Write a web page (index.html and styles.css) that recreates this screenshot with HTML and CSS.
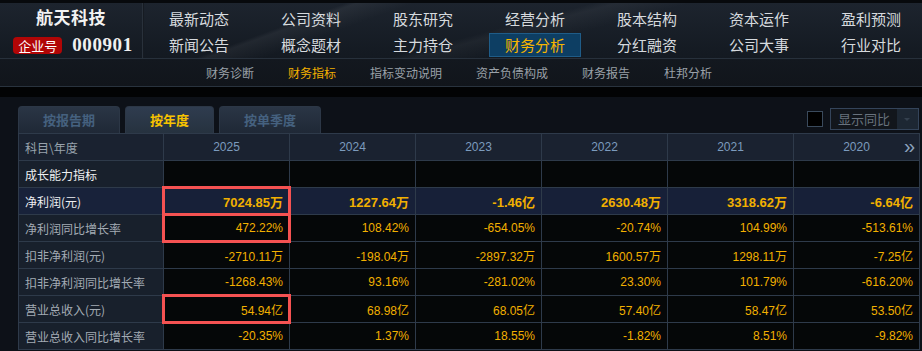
FILE: index.html
```html
<!DOCTYPE html>
<html lang="zh-CN">
<head>
<meta charset="utf-8">
<title>航天科技 - 财务指标</title>
<link rel="stylesheet" href="styles.css">
</head>
<body>
<header class="top">
  <div class="brand-row">
    <div class="brand">
      <div class="brand-name">航天科技</div>
      <div class="brand-code"><span class="badge">企业号</span><span class="code-num">000901</span></div>
    </div>
    <nav class="main-nav">
      <a>最新动态</a><a>公司资料</a><a>股东研究</a><a>经营分析</a><a>股本结构</a><a>资本运作</a><a>盈利预测</a>
      <a>新闻公告</a><a>概念题材</a><a>主力持仓</a><a class="on">财务分析</a><a>分红融资</a><a>公司大事</a><a>行业对比</a>
    </nav>
  </div>
  <nav class="sub-nav">
    <a>财务诊断</a><a class="on">财务指标</a><a>指标变动说明</a><a>资产负债构成</a><a>财务报告</a><a>杜邦分析</a>
  </nav>
</header>
<div class="strip"></div>
<main class="panel">
  <div class="toolbar">
    <div class="tabs">
      <span class="tab w1">按报告期</span>
      <span class="tab w2 on">按年度</span>
      <span class="tab w1">按单季度</span>
    </div>
    <div class="tools">
      <span class="check"></span>
      <span class="select"><span class="select-text">显示同比</span><span class="select-btn"></span></span>
    </div>
  </div>
  <table class="grid">
    <colgroup><col class="c-label"><col><col><col><col><col><col></colgroup>
    <thead>
      <tr><th class="label">科目\年度</th><th>2025</th><th>2024</th><th>2023</th><th>2022</th><th>2021</th><th class="last">2020<span class="more">»</span></th></tr>
    </thead>
    <tbody>
      <tr><td class="label white">成长能力指标</td><td></td><td></td><td></td><td></td><td></td><td></td></tr>
      <tr class="key"><td class="label white">净利润(元)</td><td class="mark">7024.85万</td><td>1227.64万</td><td>-1.46亿</td><td>2630.48万</td><td>3318.62万</td><td>-6.64亿</td></tr>
      <tr><td class="label">净利润同比增长率</td><td class="mark">472.22%</td><td>108.42%</td><td>-654.05%</td><td>-20.74%</td><td>104.99%</td><td>-513.61%</td></tr>
      <tr><td class="label">扣非净利润(元)</td><td>-2710.11万</td><td>-198.04万</td><td>-2897.32万</td><td>1600.57万</td><td>1298.11万</td><td>-7.25亿</td></tr>
      <tr><td class="label">扣非净利润同比增长率</td><td>-1268.43%</td><td>93.16%</td><td>-281.02%</td><td>23.30%</td><td>101.79%</td><td>-616.20%</td></tr>
      <tr><td class="label">营业总收入(元)</td><td class="mark">54.94亿</td><td>68.98亿</td><td>68.05亿</td><td>57.40亿</td><td>58.47亿</td><td>53.50亿</td></tr>
      <tr><td class="label">营业总收入同比增长率</td><td>-20.35%</td><td>1.37%</td><td>18.55%</td><td>-1.82%</td><td>8.51%</td><td>-9.82%</td></tr>
    </tbody>
  </table>
</main>
</body>
</html>
```

FILE: styles.css
```css
* { box-sizing: border-box; }

html, body {
  margin: 0;
  padding: 0;
  background: #0d1118;
  overflow: hidden;
}

body {
  width: 922px;
  height: 351px;
  font-family: "Noto Sans CJK SC", "Liberation Sans", sans-serif;
  font-size: 12px;
}

a { cursor: pointer; }

/* ---------- page header ---------- */
.top {
  border-top: 3px solid #07090c;
  background:
    linear-gradient(160deg, transparent 0 30%, rgba(255,255,255,0.05) 31%, transparent 36%),
    linear-gradient(165deg, transparent 0 48%, rgba(255,255,255,0.04) 50%, transparent 56%),
    linear-gradient(#1d242e, #141a22 60%, #11161d);
}

.brand-row {
  display: flex;
  height: 55px;
}

.brand {
  width: 143px;
  flex: none;
  border-right: 1px solid #29313b;
  box-shadow: 1px 0 0 #161b22;
  display: flex;
  flex-direction: column;
  align-items: center;
  padding-top: 3px;
}

.brand-name {
  color: #f2f2f2;
  font-weight: 700;
  font-size: 17px;
  line-height: 22px;
  letter-spacing: 0.5px;
}

.brand-code {
  display: flex;
  align-items: center;
  gap: 10px;
  margin-top: 6px;
  margin-left: 4px;
}

.badge {
  background: #b10606;
  color: #fff;
  font-size: 13px;
  line-height: 17px;
  height: 17px;
  padding: 0 5px;
  border-radius: 4px;
}

.code-num {
  color: #f0f0f0;
  font-family: "Liberation Serif", serif;
  font-weight: 700;
  font-size: 19px;
  letter-spacing: 0.6px;
}

.main-nav {
  display: grid;
  grid-template-columns: repeat(7, 112px);
  grid-auto-rows: 24px;
  row-gap: 2px;
  padding-top: 4px;
  flex: none;
}

.main-nav a {
  color: #d6dade;
  font-size: 15px;
  line-height: 24px;
  text-align: center;
}

.main-nav a.on {
  color: #f5b500;
  background: #0d3e63;
  border: 1px solid #1f5c88;
  line-height: 22px;
  margin: 0 10px;
}

.sub-nav {
  display: flex;
  gap: 34px;
  height: 29px;
  padding-left: 206px;
  align-items: center;
  border-top: 1px solid #27303b;
  border-bottom: 1px solid #29333e;
  background: linear-gradient(#13181f, #11151b);
}

.sub-nav a {
  color: #9aa1a8;
  font-size: 12px;
  line-height: 16px;
}

.sub-nav a.on { color: #f2b000; }

.strip {
  height: 10px;
  background: #020304;
}

/* ---------- panel ---------- */
.panel {
  padding: 9px 3px 0 18px;
}

.toolbar {
  display: flex;
  justify-content: space-between;
  align-items: flex-end;
}

.tabs {
  display: flex;
  gap: 5px;
}

.tab {
  height: 27px;
  line-height: 26px;
  text-align: center;
  font-weight: 700;
  font-size: 13px;
  color: #45617f;
  border-radius: 4px 4px 0 0;
  background: linear-gradient(#2a3545, #1f2836);
  border: 1px solid #2c3746;
  border-bottom: none;
}

.tab.w1 { width: 102px; }
.tab.w2 { width: 89px; }

.tab.on {
  color: #f7c300;
  background: linear-gradient(#2f3c4f, #26323f);
}

.tools {
  display: flex;
  align-items: center;
  gap: 7px;
  padding-bottom: 3px;
}

.check {
  width: 16px;
  height: 16px;
  background: #000;
  border: 1px solid #3a4a5c;
}

.select {
  display: flex;
  width: 89px;
  height: 22px;
  border: 1px solid #34445a;
  background: #12161c;
}

.select-text {
  flex: 1;
  color: #68727d;
  font-size: 13px;
  line-height: 20px;
  padding-left: 7px;
}

.select-btn {
  width: 21px;
  background: #1d2733;
  position: relative;
}

.select-btn::after {
  content: "";
  position: absolute;
  left: 7px;
  top: 9px;
  border: 3px solid transparent;
  border-top: 3px solid #34404e;
}

/* ---------- data grid ---------- */
.grid {
  border-collapse: collapse;
  table-layout: fixed;
  width: 901px;
}

.grid col { width: 126px; }
.grid col.c-label { width: 145px; }

.grid th,
.grid td {
  border: 1px solid #2e3a4a;
  height: 27px;
  padding: 0 6px;
  white-space: nowrap;
}

.grid thead th {
  background: #1a2230;
  color: #7c9bbd;
  font-family: "Liberation Sans", "Noto Sans CJK SC", sans-serif;
  font-weight: 400;
  font-size: 12px;
  text-align: center;
}

.grid thead th.label {
  text-align: left;
  color: #98a2ad;
  font-family: "Noto Sans CJK SC", sans-serif;
}

.grid th.last { position: relative; }

.more {
  position: absolute;
  right: 4px;
  top: 1px;
  font-size: 20px;
  line-height: 22px;
  color: #8ca3bd;
}

.grid td {
  background: #050708;
  color: #f2b000;
  text-align: right;
  font-family: "Liberation Sans", "Noto Sans CJK SC", sans-serif;
  font-size: 12px;
}

.grid td.label {
  background: #18202c;
  color: #a3abb4;
  text-align: left;
  font-family: "Noto Sans CJK SC", sans-serif;
}

.grid td.label.white { color: #eef0f2; }

.grid tr.key td {
  background: #172038;
  font-weight: 700;
  font-size: 13px;
}

.grid tr.key td.label {
  font-weight: 400;
  font-size: 12px;
  background: #18223a;
}

/* red annotation frames drawn over highlighted cells */
.grid td.mark { position: relative; }

.grid td.mark::after {
  content: "";
  position: absolute;
  left: -2px;
  right: -2px;
  top: -2px;
  bottom: -2px;
  border: 3px solid #f55252;
  pointer-events: none;
}
```
